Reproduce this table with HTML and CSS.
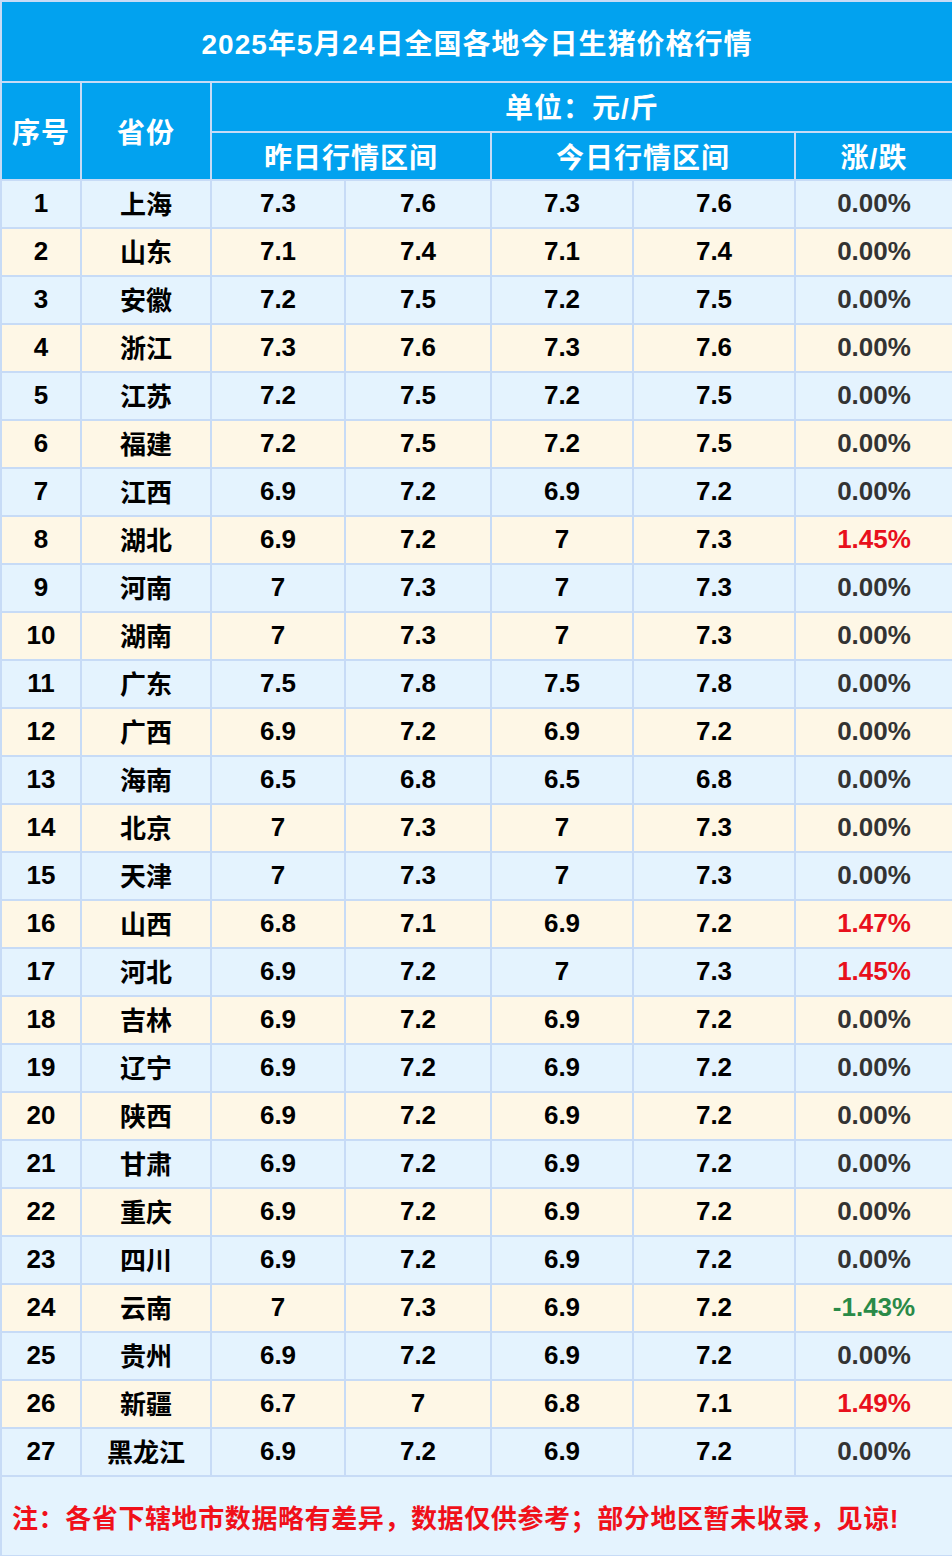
FILE: index.html
```html
<!DOCTYPE html>
<html lang="zh">
<head>
<meta charset="utf-8">
<title>2025年5月24日全国各地今日生猪价格行情</title>
<link rel="stylesheet" href="styles.css">
</head>
<body>
<table class="price-table">
  <colgroup>
    <col class="c-no"><col class="c-prov"><col class="c-y1"><col class="c-y2"><col class="c-t1"><col class="c-t2"><col class="c-chg">
  </colgroup>
  <thead>
    <tr class="title-row"><th colspan="7">2025年5月24日全国各地今日生猪价格行情</th></tr>
    <tr class="head-row1">
      <th rowspan="2" class="head-big">序号</th>
      <th rowspan="2" class="head-big">省份</th>
      <th colspan="5" class="unit">单位：元/斤</th>
    </tr>
    <tr class="head-row2">
      <th colspan="2">昨日行情区间</th>
      <th colspan="2">今日行情区间</th>
      <th>涨/跌</th>
    </tr>
  </thead>
  <tbody>
    <tr class="odd"><td>1</td><td class="prov">上海</td><td>7.3</td><td>7.6</td><td>7.3</td><td>7.6</td><td class="pct">0.00%</td></tr>
    <tr class="even"><td>2</td><td class="prov">山东</td><td>7.1</td><td>7.4</td><td>7.1</td><td>7.4</td><td class="pct">0.00%</td></tr>
    <tr class="odd"><td>3</td><td class="prov">安徽</td><td>7.2</td><td>7.5</td><td>7.2</td><td>7.5</td><td class="pct">0.00%</td></tr>
    <tr class="even"><td>4</td><td class="prov">浙江</td><td>7.3</td><td>7.6</td><td>7.3</td><td>7.6</td><td class="pct">0.00%</td></tr>
    <tr class="odd"><td>5</td><td class="prov">江苏</td><td>7.2</td><td>7.5</td><td>7.2</td><td>7.5</td><td class="pct">0.00%</td></tr>
    <tr class="even"><td>6</td><td class="prov">福建</td><td>7.2</td><td>7.5</td><td>7.2</td><td>7.5</td><td class="pct">0.00%</td></tr>
    <tr class="odd"><td>7</td><td class="prov">江西</td><td>6.9</td><td>7.2</td><td>6.9</td><td>7.2</td><td class="pct">0.00%</td></tr>
    <tr class="even"><td>8</td><td class="prov">湖北</td><td>6.9</td><td>7.2</td><td>7</td><td>7.3</td><td class="pct up">1.45%</td></tr>
    <tr class="odd"><td>9</td><td class="prov">河南</td><td>7</td><td>7.3</td><td>7</td><td>7.3</td><td class="pct">0.00%</td></tr>
    <tr class="even"><td>10</td><td class="prov">湖南</td><td>7</td><td>7.3</td><td>7</td><td>7.3</td><td class="pct">0.00%</td></tr>
    <tr class="odd"><td>11</td><td class="prov">广东</td><td>7.5</td><td>7.8</td><td>7.5</td><td>7.8</td><td class="pct">0.00%</td></tr>
    <tr class="even"><td>12</td><td class="prov">广西</td><td>6.9</td><td>7.2</td><td>6.9</td><td>7.2</td><td class="pct">0.00%</td></tr>
    <tr class="odd"><td>13</td><td class="prov">海南</td><td>6.5</td><td>6.8</td><td>6.5</td><td>6.8</td><td class="pct">0.00%</td></tr>
    <tr class="even"><td>14</td><td class="prov">北京</td><td>7</td><td>7.3</td><td>7</td><td>7.3</td><td class="pct">0.00%</td></tr>
    <tr class="odd"><td>15</td><td class="prov">天津</td><td>7</td><td>7.3</td><td>7</td><td>7.3</td><td class="pct">0.00%</td></tr>
    <tr class="even"><td>16</td><td class="prov">山西</td><td>6.8</td><td>7.1</td><td>6.9</td><td>7.2</td><td class="pct up">1.47%</td></tr>
    <tr class="odd"><td>17</td><td class="prov">河北</td><td>6.9</td><td>7.2</td><td>7</td><td>7.3</td><td class="pct up">1.45%</td></tr>
    <tr class="even"><td>18</td><td class="prov">吉林</td><td>6.9</td><td>7.2</td><td>6.9</td><td>7.2</td><td class="pct">0.00%</td></tr>
    <tr class="odd"><td>19</td><td class="prov">辽宁</td><td>6.9</td><td>7.2</td><td>6.9</td><td>7.2</td><td class="pct">0.00%</td></tr>
    <tr class="even"><td>20</td><td class="prov">陕西</td><td>6.9</td><td>7.2</td><td>6.9</td><td>7.2</td><td class="pct">0.00%</td></tr>
    <tr class="odd"><td>21</td><td class="prov">甘肃</td><td>6.9</td><td>7.2</td><td>6.9</td><td>7.2</td><td class="pct">0.00%</td></tr>
    <tr class="even"><td>22</td><td class="prov">重庆</td><td>6.9</td><td>7.2</td><td>6.9</td><td>7.2</td><td class="pct">0.00%</td></tr>
    <tr class="odd"><td>23</td><td class="prov">四川</td><td>6.9</td><td>7.2</td><td>6.9</td><td>7.2</td><td class="pct">0.00%</td></tr>
    <tr class="even"><td>24</td><td class="prov">云南</td><td>7</td><td>7.3</td><td>6.9</td><td>7.2</td><td class="pct down">-1.43%</td></tr>
    <tr class="odd"><td>25</td><td class="prov">贵州</td><td>6.9</td><td>7.2</td><td>6.9</td><td>7.2</td><td class="pct">0.00%</td></tr>
    <tr class="even"><td>26</td><td class="prov">新疆</td><td>6.7</td><td>7</td><td>6.8</td><td>7.1</td><td class="pct up">1.49%</td></tr>
    <tr class="odd"><td>27</td><td class="prov">黑龙江</td><td>6.9</td><td>7.2</td><td>6.9</td><td>7.2</td><td class="pct">0.00%</td></tr>
  </tbody>
  <tfoot>
    <tr class="note-row"><td colspan="7">注：各省下辖地市数据略有差异，数据仅供参考；部分地区暂未收录，见谅!</td></tr>
  </tfoot>
</table>
</body>
</html>
```
FILE: styles.css
```css
html, body {
  margin: 0;
  padding: 0;
  background: #ffffff;
}

.price-table {
  width: 952px;
  table-layout: fixed;
  border-collapse: collapse;
  font-family: "Liberation Sans", "Noto Sans CJK SC", sans-serif;
  font-weight: bold;
}

.c-no { width: 80px; }
.c-prov { width: 130px; }
.c-y1 { width: 134px; }
.c-y2 { width: 146px; }
.c-t1 { width: 142px; }
.c-t2 { width: 162px; }
.c-chg { width: 158px; }

.price-table th,
.price-table td {
  border: 2px solid #c7dbf6;
  padding: 0;
  text-align: center;
  vertical-align: middle;
}

.price-table thead th {
  background: #02a2ef;
  color: #ffffff;
  font-size: 28px;
  letter-spacing: 1px;
}

.title-row th {
  height: 79px;
  font-size: 28px;
}

.head-row1 th.unit {
  height: 46px;
  padding-bottom: 2px;
}

.head-row2 th {
  height: 46px;
}

.head-big {
  font-size: 28px;
}

.price-table tbody td {
  height: 45px;
  padding-bottom: 1px;
  font-size: 26px;
  color: #000000;
}

.price-table tbody td.prov {
  height: 42px;
  padding-bottom: 4px;
}

.odd td { background: #e4f3fe; }
.even td { background: #fef7e6; }

.price-table tbody td.pct { color: #333333; }
.price-table tbody td.up { color: #e8101c; }
.price-table tbody td.down { color: #2a8a48; }

.note-row td {
  height: 78px;
  background: #e4f3fe;
  color: #f0101a;
  font-size: 26px;
  letter-spacing: 0.6px;
  text-align: left;
  padding-left: 10px;
}
```
